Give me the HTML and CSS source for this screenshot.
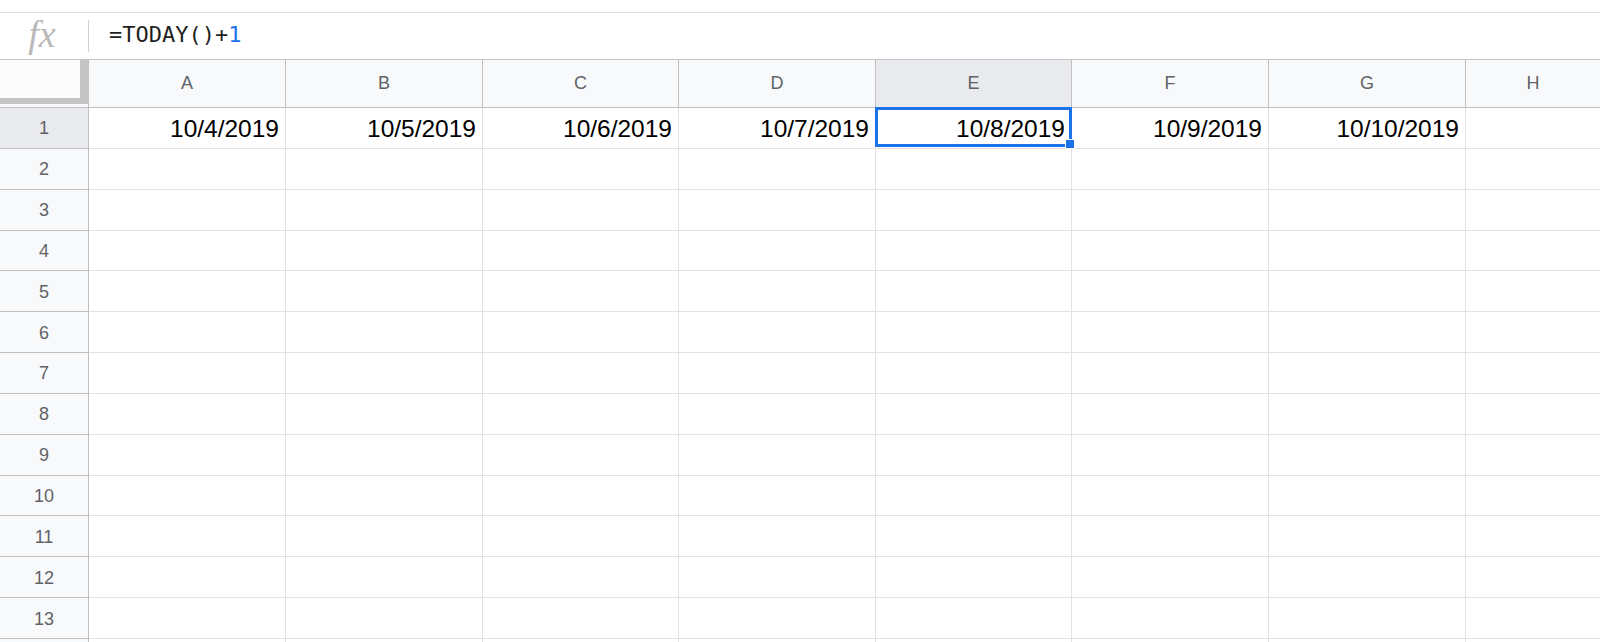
FILE: index.html
```html
<!DOCTYPE html>
<html>
<head>
<meta charset="utf-8">
<link rel="stylesheet" href="styles.css">
</head>
<body>
<div class="topstrip"></div>
<div class="formulabar">
  <div class="fx">fx</div>
  <div class="divider"></div>
  <div class="formula">=TODAY()+<span class="num">1</span></div>
</div>
<div class="sheet">
  <div class="corner"><div class="freeze"></div></div>
  <div class="colhead">A</div>
  <div class="colhead">B</div>
  <div class="colhead">C</div>
  <div class="colhead">D</div>
  <div class="colhead sel">E</div>
  <div class="colhead">F</div>
  <div class="colhead">G</div>
  <div class="colhead last">H</div>

  <div class="rowhead sel">1</div>
  <div class="cell">10/4/2019</div>
  <div class="cell">10/5/2019</div>
  <div class="cell">10/6/2019</div>
  <div class="cell">10/7/2019</div>
  <div class="cell active">10/8/2019<span class="selbox"></span><span class="handle"></span></div>
  <div class="cell">10/9/2019</div>
  <div class="cell">10/10/2019</div>
  <div class="cell last"></div>

  <div class="rowhead">2</div><div class="cell"></div><div class="cell"></div><div class="cell"></div><div class="cell"></div><div class="cell"></div><div class="cell"></div><div class="cell"></div><div class="cell last"></div>
  <div class="rowhead">3</div><div class="cell"></div><div class="cell"></div><div class="cell"></div><div class="cell"></div><div class="cell"></div><div class="cell"></div><div class="cell"></div><div class="cell last"></div>
  <div class="rowhead">4</div><div class="cell"></div><div class="cell"></div><div class="cell"></div><div class="cell"></div><div class="cell"></div><div class="cell"></div><div class="cell"></div><div class="cell last"></div>
  <div class="rowhead">5</div><div class="cell"></div><div class="cell"></div><div class="cell"></div><div class="cell"></div><div class="cell"></div><div class="cell"></div><div class="cell"></div><div class="cell last"></div>
  <div class="rowhead">6</div><div class="cell"></div><div class="cell"></div><div class="cell"></div><div class="cell"></div><div class="cell"></div><div class="cell"></div><div class="cell"></div><div class="cell last"></div>
  <div class="rowhead">7</div><div class="cell"></div><div class="cell"></div><div class="cell"></div><div class="cell"></div><div class="cell"></div><div class="cell"></div><div class="cell"></div><div class="cell last"></div>
  <div class="rowhead">8</div><div class="cell"></div><div class="cell"></div><div class="cell"></div><div class="cell"></div><div class="cell"></div><div class="cell"></div><div class="cell"></div><div class="cell last"></div>
  <div class="rowhead">9</div><div class="cell"></div><div class="cell"></div><div class="cell"></div><div class="cell"></div><div class="cell"></div><div class="cell"></div><div class="cell"></div><div class="cell last"></div>
  <div class="rowhead">10</div><div class="cell"></div><div class="cell"></div><div class="cell"></div><div class="cell"></div><div class="cell"></div><div class="cell"></div><div class="cell"></div><div class="cell last"></div>
  <div class="rowhead">11</div><div class="cell"></div><div class="cell"></div><div class="cell"></div><div class="cell"></div><div class="cell"></div><div class="cell"></div><div class="cell"></div><div class="cell last"></div>
  <div class="rowhead">12</div><div class="cell"></div><div class="cell"></div><div class="cell"></div><div class="cell"></div><div class="cell"></div><div class="cell"></div><div class="cell"></div><div class="cell last"></div>
  <div class="rowhead">13</div><div class="cell"></div><div class="cell"></div><div class="cell"></div><div class="cell"></div><div class="cell"></div><div class="cell"></div><div class="cell"></div><div class="cell last"></div>
  <div class="rowhead"></div><div class="cell"></div><div class="cell"></div><div class="cell"></div><div class="cell"></div><div class="cell"></div><div class="cell"></div><div class="cell"></div><div class="cell last"></div>
</div>
</body>
</html>
```
FILE: styles.css
```css
html, body {
  margin: 0;
  padding: 0;
  background: #ffffff;
  overflow: hidden;
  width: 1600px;
  height: 642px;
}

body {
  font-family: "Liberation Sans", Arial, sans-serif;
}

.topstrip {
  height: 12px;
  border-bottom: 1px solid #e0e0e0;
}

.formulabar {
  height: 46px;
  border-bottom: 1px solid #c4c4c4;
  display: flex;
  align-items: center;
}

.fx {
  width: 88px;
  box-sizing: border-box;
  padding-right: 4px;
  text-align: center;
  font-family: "Liberation Serif", "Times New Roman", serif;
  font-style: italic;
  font-size: 38px;
  color: #b8b8b8;
  line-height: 1;
  margin-top: -4px;
}

.divider {
  width: 1px;
  height: 32px;
  background: #d0d0d0;
}

.formula {
  padding-left: 20px;
  font-family: "DejaVu Sans Mono", "Liberation Mono", monospace;
  font-size: 22px;
  color: #1f1f1f;
  margin-top: -4px;
}

.formula .num {
  color: #1a73e8;
}

.sheet {
  display: grid;
  grid-template-columns: 89px 197px 197px 196px 197px 196px 197px 197px 1fr;
  grid-template-rows: 48px repeat(14, 40.85px);
}

.corner {
  background: #f8f9fa;
  border-right: 1px solid #c0c0c0;
  border-bottom: 1px solid #c0c0c0;
  display: flex;
  padding-bottom: 3px;
}

.freeze {
  flex: 1;
  border-right: 8px solid #c4c4c4;
  border-bottom: 6px solid #c4c4c4;
  background: #fbfbfb;
}

.colhead {
  background: #f8f9fa;
  border-right: 1px solid #c0c0c0;
  border-bottom: 1px solid #c0c0c0;
  display: flex;
  align-items: center;
  justify-content: center;
  font-size: 18px;
  color: #5f6368;
}

.colhead.sel,
.rowhead.sel {
  background: #e8eaed;
}

.colhead.last,
.cell.last {
  border-right: none;
}

.rowhead {
  background: #f8f9fa;
  border-right: 1px solid #c0c0c0;
  border-bottom: 1px solid #c0c0c0;
  display: flex;
  align-items: center;
  justify-content: center;
  padding-top: 2px;
  font-size: 18px;
  color: #5f6368;
}

.cell {
  border-right: 1px solid #e2e2e3;
  border-bottom: 1px solid #e2e2e3;
  display: flex;
  align-items: center;
  justify-content: flex-end;
  padding-right: 6px;
  padding-top: 3px;
  font-size: 24.5px;
  color: #000000;
  white-space: nowrap;
}

.cell.active {
  position: relative;
}

.selbox {
  position: absolute;
  left: -1px;
  top: -1px;
  width: 197px;
  height: 40px;
  box-sizing: border-box;
  border: 3px solid #1a73e8;
}

.handle {
  position: absolute;
  left: 189px;
  top: 31px;
  width: 10px;
  height: 10px;
  box-sizing: border-box;
  background: #1a73e8;
  border: 1px solid #ffffff;
}
```
